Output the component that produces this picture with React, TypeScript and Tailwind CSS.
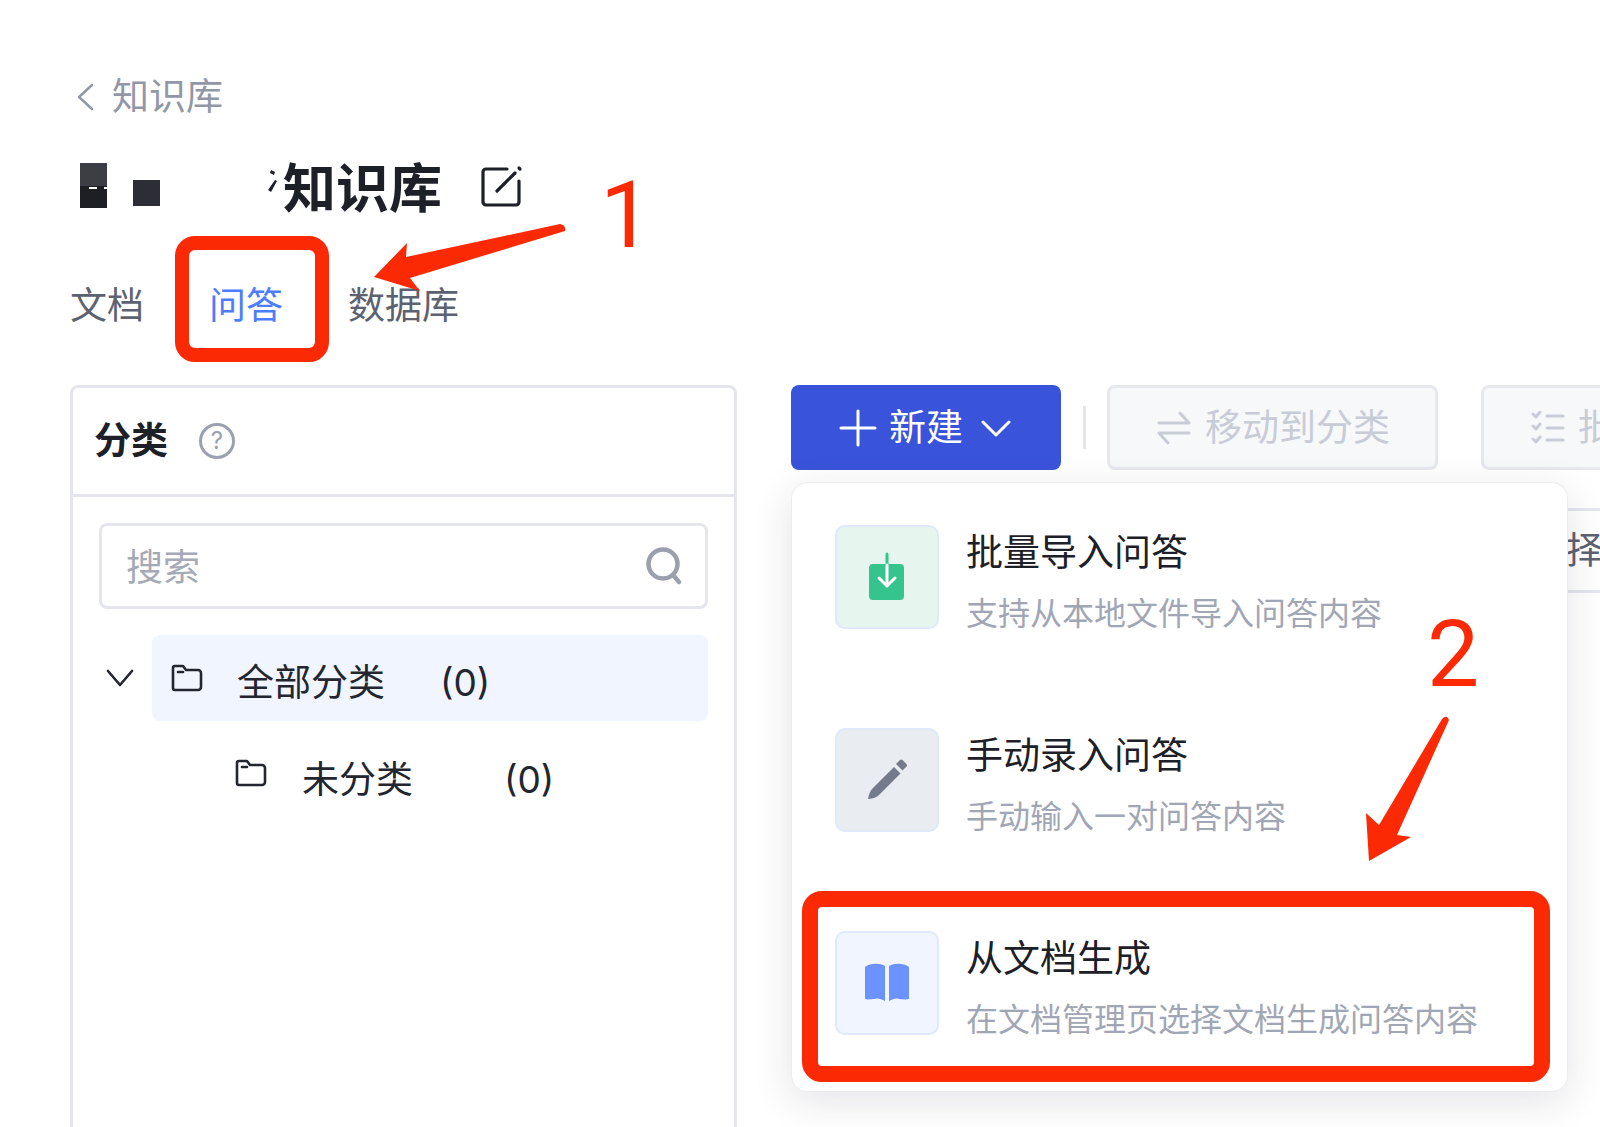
import React from "react";

const Folder = () => (
  <svg width="32" height="28" viewBox="0 0 32 28" fill="none" stroke="#23262f" strokeWidth="2.6" strokeLinejoin="round" strokeLinecap="round">
    <path d="M2 4a2 2 0 0 1 2-2h8l3 4h12a3 3 0 0 1 3 3v14a3 3 0 0 1-3 3H4a2 2 0 0 1-2-2z" />
    <path d="M7 8h5" />
  </svg>
);

const items = [
  { title: "批量导入问答", desc: "支持从本地文件导入问答内容", bg: "bg-[#e6f6ee]", icon: "import" },
  { title: "手动录入问答", desc: "手动输入一对问答内容", bg: "bg-[#e9ecf0]", icon: "pen" },
  { title: "从文档生成", desc: "在文档管理页选择文档生成问答内容", bg: "bg-[#f1f5ff]", icon: "book" },
];

const TileIcon = ({ kind }: { kind: string }) => {
  if (kind === "import")
    return (
      <svg width="100" height="100" viewBox="0 0 100 100" fill="none">
        <rect x="32" y="37" width="35" height="36" rx="4" fill="#36c48e" />
        <path d="M50 27v11" stroke="#36c48e" strokeWidth="3" strokeLinecap="round" />
        <path d="M50 38v21M42 51l8 8 8-8" stroke="#fff" strokeWidth="3" strokeLinecap="round" strokeLinejoin="round" />
      </svg>
    );
  if (kind === "pen")
    return (
      <svg width="100" height="100" viewBox="0 0 100 100">
        <path d="M31 69c1-5 2-8 5-11l21-21 6.500 6.500-21 21c-3 3-6 4-11.500 4.500z" fill="#767b8c" />
        <path d="M59 34l4-4a2 2 0 0 1 2.500 0l4 4a2 2 0 0 1 0 2.500l-4 4z" fill="#767b8c" />
      </svg>
    );
  return (
    <svg width="100" height="100" viewBox="0 0 100 100" fill="#6b93ff">
      <path d="M28 34c5-4 15-4 20-1v35c-4-2-7-3-10-2-3 0-7 1-10 0z" />
      <path d="M52 33c5-3 15-3 20 1v32c-3 1-7 0-10 0-3-1-6 0-10 2z" />
    </svg>
  );
};

export default function App() {
  return (
    <div className="relative w-[1600px] h-[1127px] overflow-hidden bg-white pl-[70px] pt-[75px] font-['Inter','Noto_Sans_CJK_SC',sans-serif]">
      {/* Breadcrumb */}
      <div className="flex items-center h-[44px] text-[37px] leading-[44px] text-[#9297a6]">
        <svg className="ml-[7px] mr-[18px]" width="17" height="28" viewBox="0 0 17 28" fill="none" stroke="#9297a6" strokeWidth="2.4" strokeLinecap="round" strokeLinejoin="round">
          <path d="M15 2L2 14l13 12" />
        </svg>
        <span>知识库</span>
      </div>

      {/* Title */}
      <div className="flex items-center h-[60px] mt-[40px] text-[53px] leading-[60px] font-bold text-[#1d2027]">
        <div className="relative w-[27px] h-[45px] ml-[10px] mt-[-8px] bg-[linear-gradient(#3d3d45_50%,#1e1e25_50%)]">
          <div className="absolute left-[9px] top-[24px] w-[8px] h-[2px] bg-white" />
          <div className="absolute right-0 top-[24px] w-[3px] h-[2px] bg-white" />
        </div>
        <div className="w-[27px] h-[26px] ml-[26px] mt-[8px] bg-[#2d2d35]" />
        <svg className="ml-[106px] mt-[-14px]" width="12" height="26" viewBox="0 0 12 26" fill="#1d2027">
          <path d="M5 1l4 2-1 3-4-2zM9 11l2 1-6 11-3-2z" />
        </svg>
        <span className="ml-[5px]">知识库</span>
        <svg className="ml-[39px] mt-[-6px]" width="42" height="42" viewBox="0 0 42 42" fill="none" stroke="#1d2027" strokeWidth="3.2" strokeLinecap="round" strokeLinejoin="round">
          <path d="M26 4H5a3 3 0 0 0-3 3v30a3 3 0 0 0 3 3h30a3 3 0 0 0 3-3V16" />
          <path d="M16 26L34 8" />
          <path d="M38 3l1 1" />
        </svg>
      </div>

      {/* Tabs */}
      <div className="flex items-center gap-[65px] h-[50px] mt-[62px] text-[37px] leading-[50px] text-[#5c6270]">
        <span>文档</span>
        <span className="text-[#4d7cfe]">问答</span>
        <span>数据库</span>
      </div>

      {/* Content */}
      <div className="flex mt-[54px] gap-[54px]">
        {/* Category panel */}
        <div className="w-[667px] h-[800px] shrink-0 border-[3px] border-[#e4e6ec] rounded-t-[8px]">
          <div className="flex items-center h-[109px] pl-[21px] border-b-[3px] border-[#e4e6ec]">
            <span className="text-[37px] font-semibold leading-[48px] text-[#1d2027]">分类</span>
            <div className="flex items-center justify-center w-[36px] h-[36px] ml-[31px] rounded-full border-[3px] border-[#9aa0b0] text-[24px] leading-none text-[#9aa0b0]">?</div>
          </div>
          <div className="px-[26px] pt-[26px]">
            <div className="flex items-center justify-between h-[86px] border-[3px] border-[#e4e6ec] rounded-[8px] pl-[24px] pr-[21px]">
              <span className="pt-[3px] text-[37px] text-[#a5a9b6]">搜索</span>
              <svg width="40" height="40" viewBox="0 0 40 40" fill="none" stroke="#9aa0ae" strokeWidth="4.500" strokeLinecap="round">
                <circle cx="19" cy="18" r="14.500" />
                <path d="M29 29l6 7" />
              </svg>
            </div>

            <div className="flex items-center h-[86px] mt-[26px]">
              <svg className="ml-[7px] mr-[18px] shrink-0" width="28" height="18" viewBox="0 0 28 18" fill="none" stroke="#23262f" strokeWidth="2.600" strokeLinecap="round" strokeLinejoin="round">
                <path d="M2 2l12 14L26 2" />
              </svg>
              <div className="flex items-center flex-1 h-[86px] pl-[19px] rounded-[8px] bg-[#f0f5ff] text-[37px] text-[#23262f]">
                <Folder />
                <span className="ml-[34px] w-[203px] pt-[9px]">全部分类</span>
                <span className="pt-[9px]">(0)</span>
              </div>
            </div>
            <div className="flex items-center h-[86px] mt-[16px] pl-[136px] text-[37px] text-[#23262f]">
              <span className="mt-[-14px]"><Folder /></span>
              <span className="ml-[35px] w-[202px]">未分类</span>
              <span>(0)</span>
            </div>
          </div>
        </div>

        {/* Right column */}
        <div className="relative flex-1 min-w-0">
          <div className="flex items-center">
            <div className="flex items-center w-[270px] h-[85px] shrink-0 rounded-[8px] bg-[#3a53db] text-[37px] text-white pl-[48px]">
              <svg width="38" height="38" viewBox="0 0 38 38" fill="none" stroke="#fff" strokeWidth="3" strokeLinecap="round">
                <path d="M19 2v34M2 19h34" />
              </svg>
              <span className="ml-[12px] pt-[1px]">新建</span>
              <svg className="ml-[18px]" width="30" height="18" viewBox="0 0 30 18" fill="none" stroke="#fff" strokeWidth="3" strokeLinecap="round" strokeLinejoin="round">
                <path d="M2 3l13 13L28 3" />
              </svg>
            </div>
            <div className="w-[3px] h-[43px] ml-[22px] mr-[21px] shrink-0 bg-[#e4e6ec]" />
            <div className="flex items-center w-[331px] h-[85px] shrink-0 rounded-[8px] border-[3px] border-[#e6e8ee] bg-[#f7f8fa] text-[37px] text-[#c8ccd6] pl-[47px]">
              <svg width="34" height="34" viewBox="0 0 34 34" fill="none" stroke="#c8ccd6" strokeWidth="3" strokeLinecap="round" strokeLinejoin="round">
                <path d="M2 12h30L23 2" />
                <path d="M32 22H2l9 10" />
              </svg>
              <span className="ml-[14px] pt-[1px]">移动到分类</span>
            </div>
            <div className="flex items-center w-[300px] h-[85px] ml-[43px] shrink-0 rounded-[8px] border-[3px] border-[#e6e8ee] bg-[#f7f8fa] text-[37px] text-[#c8ccd6] pl-[47px]">
              <svg className="shrink-0" width="34" height="34" viewBox="0 0 34 34" fill="none" stroke="#c8ccd6" strokeWidth="3" strokeLinecap="round" strokeLinejoin="round">
                <path d="M2 3l3 3 4-5M2 15l3 3 4-5M2 28l3 3 4-5" />
                <path d="M16 5h16M16 17h16M16 29h16" />
              </svg>
              <span className="ml-[13px] pt-[1px] whitespace-nowrap">批量操作</span>
            </div>
          </div>

          <div className="flex items-center w-[400px] h-[85px] mt-[38px] ml-[667px] border-[3px] border-[#e4e6ec] pl-[31px] text-[37px] text-[#5c6270] whitespace-nowrap">
            请选择
          </div>

          {/* Dropdown menu */}
          <div className="absolute left-0 top-[97px] w-[777px] h-[610px] pt-[42px] pl-[43px] rounded-[16px] bg-white border border-[#ebecf0] shadow-[0_10px_40px_rgba(30,35,60,0.12)]">
            {items.map((it) => (
              <div key={it.title} className="flex h-[203px]">
                <div className={`flex items-center justify-center w-[104px] h-[104px] shrink-0 rounded-[10px] border-2 border-[#dfe9fb] ${it.bg}`}>
                  <TileIcon kind={it.icon} />
                </div>
                <div className="ml-[27px] pt-[1px]">
                  <div className="text-[37px] leading-[54px] text-[#1d2027]">{it.title}</div>
                  <div className="mt-[10px] text-[32px] leading-[48px] text-[#a1a6b5]">{it.desc}</div>
                </div>
              </div>
            ))}
          </div>
        </div>
      </div>

      {/* Red annotations */}
      <div className="absolute left-[175px] top-[236px] w-[154px] h-[126px] border-[14px] border-[#fb2a05] rounded-[20px]" />
      <div className="absolute left-[802px] top-[891px] w-[748px] h-[191px] border-[16px] border-[#fb2a05] rounded-[20px]" />
      <svg className="absolute left-0 top-0 pointer-events-none" width="1600" height="1127" viewBox="0 0 1600 1127" fill="#fb2a05">
        <path d="M374 277L407 243L406 257L560 224Q566 225 565 231L410 278L420 291z" />
        <path d="M1369 861L1366 813L1379 825L1442 719Q1447 714 1449 720L1397 835L1411 837z" />
      </svg>
      <span className="absolute left-[600px] top-[160px] font-['Roboto',sans-serif] font-normal text-[93px] leading-[112px] text-[#fb2a05]">1</span>
      <span className="absolute left-[1427px] top-[599px] font-['Roboto',sans-serif] font-normal text-[93px] leading-[112px] text-[#fb2a05]">2</span>
    </div>
  );
}
